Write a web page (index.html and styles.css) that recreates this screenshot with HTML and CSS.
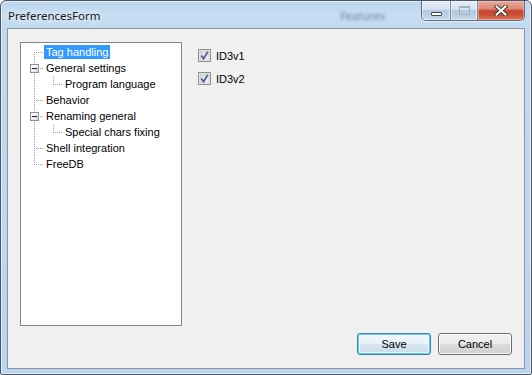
FILE: index.html
```html
<!DOCTYPE html>
<html>
<head>
<meta charset="utf-8">
<title>PreferencesForm</title>
<link rel="stylesheet" href="styles.css">
</head>
<body>
<div class="window">
  <div class="titlebar">
    <span class="title">PreferencesForm</span>
    <span class="ghost">Features</span>
    <div class="caption-buttons">
      <div class="cb cb-min"><span class="min-glyph"></span></div>
      <div class="cb cb-max"><span class="max-glyph"></span></div>
      <div class="cb cb-close">
        <svg width="14" height="11" viewBox="0 0 14 11">
          <path d="M2.5 1.5 L11.5 9.5 M11.5 1.5 L2.5 9.5" stroke="#3b3b3b" stroke-width="4" stroke-linecap="square"/>
          <path d="M2.5 1.5 L11.5 9.5 M11.5 1.5 L2.5 9.5" stroke="#ffffff" stroke-width="2" stroke-linecap="square"/>
        </svg>
      </div>
    </div>
  </div>
  <div class="client">
    <div class="main">
      <div class="tree">
        <div class="row"><span class="g g-first"></span><span class="label sel">Tag handling</span></div>
        <div class="row"><span class="g g-tee"><span class="box"><span class="minus"></span></span></span><span class="label">General settings</span></div>
        <div class="row"><span class="g g-pass"></span><span class="g c-last"></span><span class="label">Program language</span></div>
        <div class="row"><span class="g g-tee"></span><span class="label">Behavior</span></div>
        <div class="row"><span class="g g-tee"><span class="box"><span class="minus"></span></span></span><span class="label">Renaming general</span></div>
        <div class="row"><span class="g g-pass"></span><span class="g c-last"></span><span class="label">Special chars fixing</span></div>
        <div class="row"><span class="g g-tee"></span><span class="label">Shell integration</span></div>
        <div class="row"><span class="g g-last"></span><span class="label">FreeDB</span></div>
      </div>
      <div class="options">
        <label class="check">
          <svg class="cbox" width="13" height="13" viewBox="0 0 13 13">
            <defs>
              <linearGradient id="cbg" x1="0" y1="0" x2="1" y2="1">
                <stop offset="0" stop-color="#d6d6d6"/>
                <stop offset="1" stop-color="#f6f6f6"/>
              </linearGradient>
            </defs>
            <rect x="0.5" y="0.5" width="12" height="12" fill="#f4f4f4" stroke="#8e8f8f"/>
            <rect x="2" y="2" width="9" height="9" fill="url(#cbg)" stroke="#b9b9b9" stroke-width="0.6"/>
            <path d="M3.3 6.4 L5.6 9.6 L9.8 2.8" fill="none" stroke="#4b5f99" stroke-width="1.7"/>
          </svg>
          <span>ID3v1</span>
        </label>
        <label class="check">
          <svg class="cbox" width="13" height="13" viewBox="0 0 13 13">
            <rect x="0.5" y="0.5" width="12" height="12" fill="#f4f4f4" stroke="#8e8f8f"/>
            <rect x="2" y="2" width="9" height="9" fill="url(#cbg)" stroke="#b9b9b9" stroke-width="0.6"/>
            <path d="M3.3 6.4 L5.6 9.6 L9.8 2.8" fill="none" stroke="#4b5f99" stroke-width="1.7"/>
          </svg>
          <span>ID3v2</span>
        </label>
      </div>
    </div>
    <div class="buttons">
      <button class="btn btn-default">Save</button>
      <button class="btn">Cancel</button>
    </div>
  </div>
</div>
</body>
</html>
```
FILE: styles.css
```css
html, body {
  margin: 0;
  padding: 0;
  background: #ffffff;
}

.window {
  width: 532px;
  height: 375px;
  box-sizing: border-box;
  border: 1px solid #4a5566;
  border-radius: 6px 6px 2px 2px;
  background: linear-gradient(to bottom, #bdd5ec 0px, #c6ddf3 14px, #c2daf1 28px, #bad5ef 100%);
  box-shadow: inset 0 0 0 1px rgba(255, 255, 255, 0.55);
  padding: 0 6px 5px 6px;
  display: flex;
  flex-direction: column;
  font-family: "Liberation Sans", Arial, sans-serif;
  font-size: 11px;
  color: #000;
  overflow: hidden;
}

.titlebar {
  height: 27px;
  display: flex;
  align-items: center;
  flex: none;
}

.title {
  font-family: "Noto Sans", "Open Sans", sans-serif;
  font-size: 11.5px;
  color: #1a1a1a;
  padding-left: 1px;
  padding-top: 1px;
  text-shadow: 0 0 6px rgba(255, 255, 255, 0.9), 0 0 10px rgba(255, 255, 255, 0.7);
}

.ghost {
  margin-left: auto;
  margin-right: 36px;
  font-family: "Noto Sans", sans-serif;
  font-size: 11px;
  color: rgba(40, 50, 70, 0.55);
  filter: blur(1.4px);
  padding-top: 2px;
}

.caption-buttons {
  align-self: flex-start;
  display: flex;
  height: 19px;
  border: 1px solid #5e6b7c;
  border-top: none;
  border-radius: 0 0 5px 5px;
  overflow: hidden;
  box-shadow: 0 1px 0 rgba(255, 255, 255, 0.6);
}

.cb {
  height: 19px;
  display: flex;
  align-items: center;
  justify-content: center;
}

.cb-min, .cb-max {
  width: 28px;
  background: linear-gradient(to bottom, #e4eef9 0%, #d3e1f0 45%, #b5c9de 50%, #c5d8ec 100%);
  border-right: 1px solid #7d8a9a;
  box-shadow: inset 0 0 0 1px rgba(255, 255, 255, 0.5);
}

.cb-max {
  width: 26px;
}

.min-glyph {
  width: 11px;
  height: 4px;
  box-sizing: border-box;
  border: 1px solid #3c4552;
  background: #fff;
  margin-top: 6px;
  border-radius: 1px;
}

.max-glyph {
  width: 11px;
  height: 9px;
  box-sizing: border-box;
  border: 1px solid #9aa6b4;
  border-top-width: 2px;
  background: transparent;
  opacity: 0.8;
}

.cb-close {
  width: 46px;
  background: linear-gradient(to bottom, #e9a899 0%, #dc8a76 40%, #c7432c 52%, #cc5037 75%, #de7a5e 100%);
  box-shadow: inset 0 0 0 1px rgba(255, 220, 210, 0.45);
}

.client {
  flex: 1;
  box-sizing: border-box;
  border: 1px solid #8a95a3;
  background: #f0f0f0;
  padding: 13px 12px 13px 12px;
  display: flex;
  flex-direction: column;
}

.main {
  display: flex;
  gap: 16px;
}

.tree {
  width: 162px;
  height: 284px;
  box-sizing: border-box;
  border: 1px solid #828790;
  background: #fff;
  padding-top: 1px;
}

.row {
  height: 16px;
  display: flex;
  align-items: center;
}

.g {
  flex: none;
  width: 23px;
  height: 16px;
  display: flex;
  background-repeat: no-repeat;
}

.g-first {
  background-image:
    repeating-linear-gradient(to bottom, #a0a0a0 0 1px, transparent 1px 2px),
    repeating-linear-gradient(to right, #a0a0a0 0 1px, transparent 1px 2px);
  background-size: 1px 8px, 10px 1px;
  background-position: 13px 8px, 13px 8px;
}

.g-tee {
  background-image:
    repeating-linear-gradient(to bottom, #a0a0a0 0 1px, transparent 1px 2px),
    repeating-linear-gradient(to right, #a0a0a0 0 1px, transparent 1px 2px);
  background-size: 1px 16px, 10px 1px;
  background-position: 13px 0, 13px 8px;
}

.g-last {
  background-image:
    repeating-linear-gradient(to bottom, #a0a0a0 0 1px, transparent 1px 2px),
    repeating-linear-gradient(to right, #a0a0a0 0 1px, transparent 1px 2px);
  background-size: 1px 9px, 10px 1px;
  background-position: 13px 0, 13px 8px;
}

.g-pass {
  background-image: repeating-linear-gradient(to bottom, #a0a0a0 0 1px, transparent 1px 2px);
  background-size: 1px 16px;
  background-position: 13px 0;
}

.c-last {
  width: 19px;
  background-image:
    repeating-linear-gradient(to bottom, #a0a0a0 0 1px, transparent 1px 2px),
    repeating-linear-gradient(to right, #a0a0a0 0 1px, transparent 1px 2px);
  background-size: 1px 9px, 10px 1px;
  background-position: 9px 0, 9px 8px;
}

.box {
  width: 9px;
  height: 9px;
  box-sizing: border-box;
  margin: 4px 0 0 9px;
  border: 1px solid #8f8f8f;
  background: linear-gradient(135deg, #ffffff 0%, #f0f0f0 50%, #d4d4d4 100%);
  display: flex;
  align-items: center;
  justify-content: center;
}

.minus {
  width: 5px;
  height: 1px;
  background: #1e1e1e;
}

.label {
  height: 14px;
  line-height: 14px;
  padding: 0 2px;
  white-space: nowrap;
}

.label.sel {
  background: #3399ff;
  color: #fff;
}

.options {
  padding-top: 7px;
  display: flex;
  flex-direction: column;
  gap: 10px;
}

.check {
  display: flex;
  align-items: center;
  gap: 5px;
  height: 13px;
}

.cbox {
  flex: none;
  display: block;
}

.buttons {
  margin-top: auto;
  display: flex;
  justify-content: flex-end;
  gap: 7px;
}

.btn {
  width: 74px;
  height: 22px;
  box-sizing: border-box;
  margin: 0;
  padding: 0;
  font-family: "Liberation Sans", Arial, sans-serif;
  font-size: 11px;
  color: #000;
  border: 1px solid #707070;
  border-radius: 3px;
  background: linear-gradient(to bottom, #f2f2f2 0%, #ebebeb 50%, #dddddd 51%, #cfcfcf 100%);
  box-shadow: inset 0 0 0 1px rgba(255, 255, 255, 0.8);
}

.btn-default {
  border-color: #3c7fb1;
  background: linear-gradient(to bottom, #f1f7fb 0%, #e8f1f8 50%, #d8e6f0 51%, #cbdde9 100%);
  box-shadow: inset 0 0 0 1px #5fd0f8, inset 0 0 0 2px rgba(255, 255, 255, 0.6);
}
```
